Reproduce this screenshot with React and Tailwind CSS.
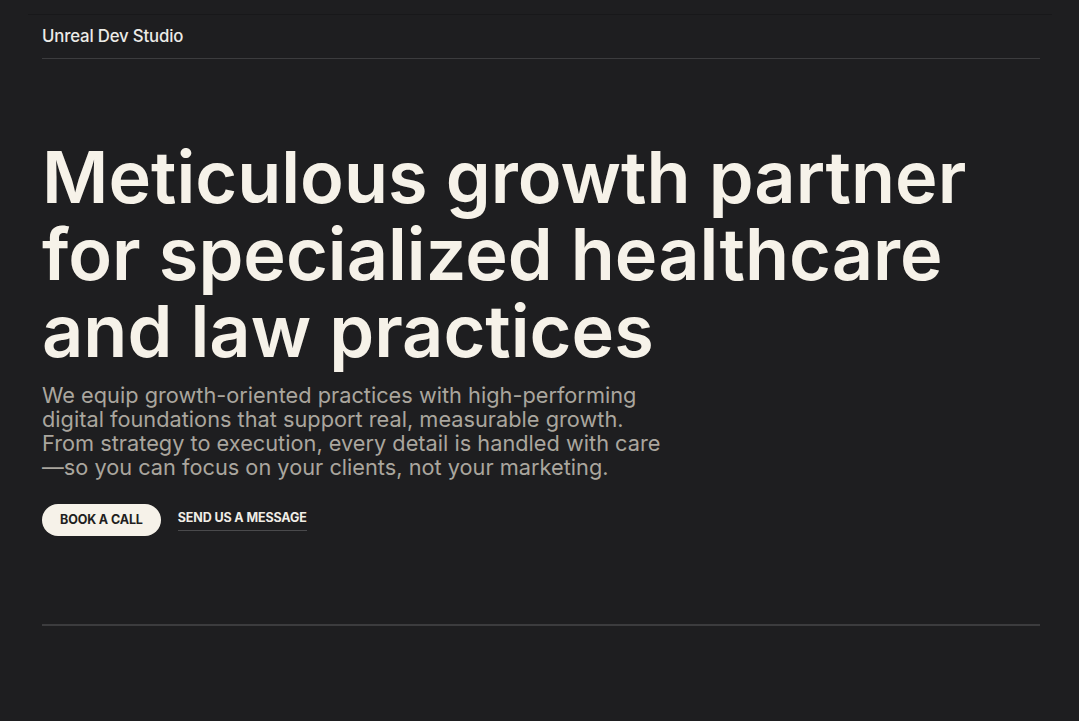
export default function App() {
  return (
    <div className="min-h-[721px] w-full bg-[#1e1e20] font-['Inter',sans-serif]">
      <div className="pl-[28px] pr-[27px] pt-[14px]">
        <div className="h-px bg-[#18181a]" />
      </div>
      <div className="pl-[42px] pr-[39px]">
        <header className="flex h-[44px] items-center border-b border-[#3c3c3e] pt-[1px]">
          <span className="text-[16.8px] font-medium tracking-[-0.01em] text-[#ecebe7]">Unreal Dev Studio</span>
        </header>
        <section className="pt-[79px]">
          <h1 className="text-[72px] font-semibold leading-[77px] tracking-normal text-[#f6f2e9]">
            Meticulous growth partner
            <br />
            for specialized healthcare
            <br />
            and law practices
          </h1>
          <p className="mt-[14px] text-[21.75px] leading-[24px] text-[#aaa69e]">
            We equip growth-oriented practices with high-performing
            <br />
            digital foundations that support real, measurable growth.
            <br />
            From strategy to execution, every detail is handled with care
            <br />
            —so you can focus on your clients, not your marketing.
          </p>
          <div className="mt-[25px] flex items-center gap-[17px]">
            <button className="flex h-[32px] items-center rounded-full bg-[#f6f2e9] px-[18px] text-[12.5px] font-bold tracking-[-0.01em] text-[#1e1e20]">
              BOOK A CALL
            </button>
            <button className="border-b border-[#4a4a4c] pb-[3px] text-[12.5px] font-bold tracking-[-0.01em] text-[#f0ede6]">
              SEND US A MESSAGE
            </button>
          </div>
        </section>
        <div className="mt-[88px] h-[2px] bg-[#3c3c3e]" />
      </div>
    </div>
  );
}
